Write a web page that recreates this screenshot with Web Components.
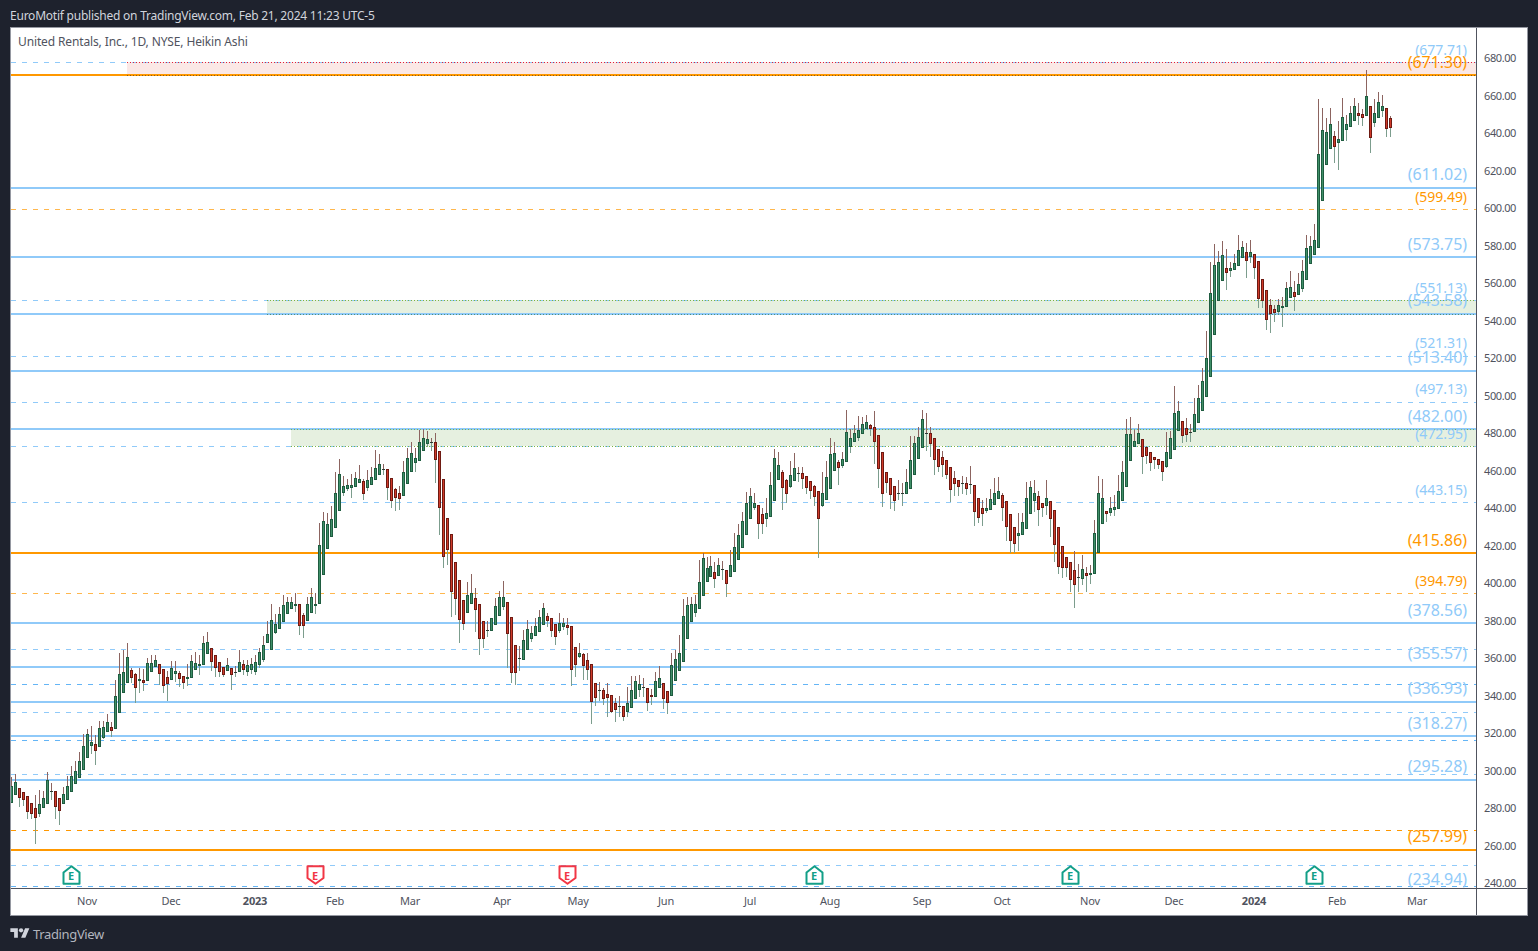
<!DOCTYPE html>
<html><head><meta charset="utf-8"><style>
html,body{margin:0;padding:0;background:#1e222d;height:100%}
body{font-family:"Noto Sans","Open Sans",sans-serif;overflow:hidden}
</style></head><body>
<tv-app>
  <tv-header>EuroMotif published on TradingView.com, Feb 21, 2024 11:23 UTC-5</tv-header>
  <tv-chart title-text="United Rentals, Inc., 1D, NYSE, Heikin Ashi"></tv-chart>
  <tv-footer>TradingView</tv-footer>
</tv-app>
<script>
const FONT='"Noto Sans","Open Sans",sans-serif';
const SEG=[
 [0,620,"g498,548,470,548;g487,524,462,524;r505,533,505,560;r517,540,517,558;r529,575,529,597;r550,581,550,597;r565,593,525,672;g553,581,510,590;g535,565,513,565;g481,551,456,551;d514,516,490,540;r514,560,514,597;r535,572,535,615;g523,553,502,553;g499,539,468,539;g469,517,438,517;g454,493,422,493;g424,475,396,475;g379,451,343,451;g343,415,327,415;g367,379,318,402;r373,394,345,434;g325,382,303,382;g322,355,303,358;g307,337,282,337;r322,334,305,352;g229,328,180,328;g163,280,99,280;g157,220,90,220;g112,190,69,190;r151,175,145,190;r163,205,160,248;g178,184,145,218;r181,188,148,212;g130,184,115,184;g130,157,105,157;g121,142,105,142;r133,163,133,195;r148,199,148,218;r172,193,152,243;g145,181,124,181;g154,163,124,185;r160,178,152,200;r169,190,169,207;g172,178,133,197;g124,175,105,175;g130,151,96,151;g133,139,106,165;g70,136,48,136;g67,103,36,103;r85,127,85,152;r106,145,106,172;r127,157,127,172;r142,166,142,172;g136,154,114,154;r145,166,145,210;d156,158,138,172;g127,157,90,157"],
 [58,0,"r1992,2010,1980,2025;g1995,2016,1980,2028;g1992,2010,1974,2022;g1986,2016,1965,2025;g1956,1995,1944,2004;g1935,1980,1908,1986"],
 [64,420,"g643,670,603,670;g601,690,552,690;g612,638,582,642;g583,626,560,626;g556,605,525,605;g547,581,531,581;g546,566,531,566;g553,557,520,575;r553,617,553,645;r586,617,580,655;g553,602,530,602;g532,578,505,578;g553,557,518,582;g376,553,310,553;g304,464,276,464;g313,386,280,386;g298,350,258,350;g220,323,155,323;g163,272,117,272;g199,218,168,228;g196,208,178,212;g196,203,163,234;g175,200,155,200;g178,188,136,188;r184,221,178,240;g181,203,150,212;g172,194,142,194;g145,181,90,181;g133,164,102,164;d148,150,132,165;r148,203,148,240;r175,242,175,264;r208,233,204,272;r220,236,198,270;g157,227,124,227;g115,193,84,193;g100,155,67,155;g115,128,85,155;g67,122,30,122;g55,94,28,94;g58,73,33,80;d67,71,55,92;r67,119,40,188;r94,263,94,345;r178,412,178,445;r295,389,295,435;r343,515,343,590;r427,536,427,586;r481,599,481,670;r541,611,541,630"],
 [114,420,"g526,578,487,578"],
 [115,570,"g70,102,12,103;r85,119,55,185;r103,207,103,255;r154,207,154,234;d181,185,154,201;g145,182,145,182;g109,164,85,164;g82,137,64,137;g82,110,33,120;r97,191,97,293;r142,308,142,338;r226,308,226,345;d265,267,228,302;g211,269,180,269;g178,239,150,239;g190,208,168,216;g169,199,145,199;g142,185,120,185;g115,164,100,164;r139,152,128,172;r145,182,145,200;r163,200,163,224;g160,182,129,190;g160,172,145,180;r166,173,145,195;r169,299,169,347;r232,284,232,320;g250,260,220,265;r253,287,250,330;r271,299,250,330;r283,395,283,462;r340,383,340,407;d361,365,337,392;r361,386,355,404;r373,383,340,440;r376,425,376,428;r400,419,385,455;d408,410,378,440;r409,440,409,453;g400,425,350,440;g361,413,318,413;g334,386,318,386;g343,361,315,380;d352,356,325,380;r355,398,355,422;r376,382,358,405;g334,380,305,380;g325,355,288,355;r340,386,340,416;r364,398,364,432;g286,379,250,379;g268,334,240,334;g250,302,195,302;g139,277,88,277;g106,208,80,208;g103,157,82,157;g103,130,75,140;g37,118,-30,118;g-36,77,-51,77;g-6,35,-39,35;g-12,20,-42,20;r7,26,-24,55;g-15,17,-36,17"],
 [178,400,"d507,509,483,540;r511,551,511,590;g496,530,450,530;g441,515,400,515;g406,479,372,479;g364,443,336,443;g310,404,277,404;g289,356,265,356;g310,323,280,330;r316,371,316,417;r343,371,325,402;g340,356,295,380;g256,350,217,350;g175,302,147,302;g196,239,156,239;r217,263,210,330;r241,281,238,309;g226,260,183,265;g205,242,160,242;d220,224,200,245;r220,236,202,267;r229,263,229,282;r244,272,244,298;r259,290,255,318;r274,356,274,474;g280,317,216,320;g232,299,183,299;g163,266,114,266;g160,214,126,214;r187,203,180,255;g178,197,156,205;g97,187,30,187;g115,142,88,158;g100,127,75,127;g91,115,48,122;g73,103,52,103;g67,88,45,88;r76,88,72,108;r82,127,33,192;r106,208,106,265;r157,281,157,320;r217,250,217,280;r235,284,235,327;r259,302,259,332;d280,282,240,300;d280,282,250,318;g247,281,208,281;g181,266,108,266;g130,224,108,224;g112,176,82,176;g58,145,30,145;d99,101,40,152;r100,131,82,170;r115,179,115,225;r148,200,148,215;r172,194,153,230;r181,224,181,236;r202,269,202,305;r235,251,213,287;r241,260,241,288;d249,251,228,282;r250,266,232,285;d253,257,198,282"],
 [241,380,"r316,395,316,438;r355,413,355,428;r385,401,360,438;g385,392,353,398;g358,389,327,389;g340,374,294,374;g334,356,291,356;r346,383,338,422;r364,440,364,482;r403,482,403,520;r442,491,442,518;g460,467,400,513;g427,464,400,464;g355,446,306,446;g322,401,303,401;g340,362,300,396;r349,389,333,437;r370,383,370,412;g355,377,300,404;r364,416,364,470;r391,494,391,545;r442,560,442,582;r499,563,499,593;r532,563,532,590;r547,599,547,636;r571,614,514,684;d591,594,552,636;g568,596,525,614;r580,587,560,636;g580,584,555,612;g460,581,420,581;g340,520,289,520;g355,431,297,431;r394,401,392,427;g385,398,352,407;g382,391,345,407;g334,386,285,386;g277,362,243,362;g163,320,117,320;g163,242,111,242;g184,202,150,202;g160,193,132,193;r178,230,178,282;r202,229,202,252;r217,250,217,273;r232,241,232,268;r238,254,238,267;r244,277,244,303;g217,260,156,264;g175,238,153,238;g100,209,18,209;g94,154,62,154;r124,169,124,189;r145,166,114,186;d156,158,132,186;g103,157,55,157"],
 [297,90,"g925,999,885,999;g874,963,835,963;g805,920,723,920;g610,862,516,862;g526,736,462,736;g517,632,484,632;g496,574,453,574;r535,550,477,600;g535,544,516,560;g520,540,492,540;g481,529,435,529;g472,505,454,505;r487,514,460,564;g487,502,450,518;r493,535,493,566;r514,626,514,653;r568,634,568,653;r601,691,601,720;r646,673,628,728;r658,668,645,696;g646,665,628,672;g649,655,622,710;g595,652,576,652;g592,625,543,625;r607,622,573,662;g583,616,548,616;g544,598,510,605;g475,571,435,571;g469,523,438,523;g451,496,403,496;g193,475,27,475;g121,334,54,334;g127,226,85,226;g103,178,55,178;r139,172,124,218"],
 [332,60,"g237,248,182,330;g172,242,114,242;g193,209,165,242;g160,200,138,200;g139,182,114,182;r160,167,129,195;r163,173,148,198;g109,167,30,167;r139,233,139,278;g160,188,117,200;g127,173,96,173;g139,152,105,170;r145,206,145,231;r175,203,168,231"]
];
const C={g:['#1f5c40','#3f8f68'],r:['#6e1a12','#cf3a2a'],d:['#2b3b33','#2b3b33']};
const WICKUP='#8c6460',WICKDN='#7c9d8d';
function candles(){let s='';
 for(const [start,oy,rows] of SEG){rows.split(';').forEach((row,k)=>{
  const i=start+k,x=i<175?11+4*i:10+4*i,kind=row[0],n=row.slice(1).split(',').map(Number);
  const Y=v=>Math.round(oy+v/3),t=Y(n[0]);let b=Y(n[1]);const h=Y(n[2]),l=Y(n[3]);
  if(kind==='d')b=t+1;if(b<=t)b=t+1;
  if(h<t)s+=`<rect x="${x}" y="${h}" width="1" height="${t-h}" fill="${WICKUP}"/>`;
  if(l>b)s+=`<rect x="${x}" y="${b}" width="1" height="${l-b}" fill="${WICKDN}"/>`;
  const [d,f]=C[kind];
  s+=`<rect x="${x-1}" y="${t}" width="3" height="${b-t}" fill="${d}"/>`;
  if(b-t>2)s+=`<rect x="${x}" y="${t+1}" width="1" height="${b-t-2}" fill="${f}"/>`;
 });}
 return s;}
const BLUE='#90caf9',DBLUE='#64b5f6',ORG='#ff9800',LORG='#ffb74d';
const SOLID=[[75,ORG],[188,BLUE],[257,BLUE],[314,BLUE],[371,BLUE],[429,BLUE],[553,ORG],[623,BLUE],[667,BLUE],[702,BLUE],[736,BLUE],[780,BLUE],[850,ORG]];
const DASH=[[62,BLUE],[209,LORG],[300,BLUE],[356,BLUE],[402,BLUE],[446,BLUE],[502,BLUE],[593,LORG],[649,BLUE],[684,DBLUE],[712,BLUE],[740,DBLUE],[774,BLUE],[830,ORG],[865,BLUE],[886,DBLUE]];
const LABELS=[[50,'677.71',14,BLUE],[62,'671.30',16,ORG],[174,'611.02',16,BLUE],[197,'599.49',14,ORG],[244,'573.75',16,BLUE],[288,'551.13',14,BLUE],[300,'543.58',16,BLUE],[343,'521.31',14,BLUE],[357,'513.40',16,BLUE],[389,'497.13',14,BLUE],[416,'482.00',16,BLUE],[434,'472.95',14,BLUE],[490,'443.15',14,BLUE],[540,'415.86',16,ORG],[581,'394.79',14,ORG],[610,'378.56',16,BLUE],[653,'355.57',16,BLUE],[688,'336.93',16,BLUE],[723,'318.27',16,BLUE],[766,'295.28',16,BLUE],[836,'257.99',16,ORG],[879,'234.94',16,BLUE]];
const EARN=[[71,1],[315,0],[567,0],[814,1],[1070,1],[1314,1]];
class TvApp extends HTMLElement{constructor(){super();this.attachShadow({mode:'open'}).innerHTML=`<style>:host{display:grid;grid-template-rows:27px 889px 35px;width:1538px;height:951px;background:#1e222d;box-sizing:border-box}</style><slot></slot>`}}
class TvHeader extends HTMLElement{constructor(){super();this.attachShadow({mode:'open'}).innerHTML=`<style>:host{display:flex;align-items:center;padding:3px 10px 0;box-sizing:border-box;height:27px;color:#d1d4dc;font:12px ${FONT};letter-spacing:-.23px;white-space:nowrap}</style><slot></slot>`}}
class TvFooter extends HTMLElement{constructor(){super();this.attachShadow({mode:'open'}).innerHTML=`<style>:host{display:flex;align-items:center;gap:3px;padding:0 10px;box-sizing:border-box;height:35px;color:#b2b5be;font:13px ${FONT};letter-spacing:-.35px}svg{width:20px;height:15px;display:block}</style><svg viewBox="0 0 36 28"><path fill="#d1d4dc" d="M14 22H7V11H0V4h14v18zM28 22h-8l7.5-18h8L28 22z"/><circle fill="#d1d4dc" cx="20" cy="8" r="4"/></svg><slot></slot>`}}
class TvPriceAxis extends HTMLElement{constructor(){super();let h='';for(let p=680;p>=240;p-=20)h+=`<span>${p}.00</span>`;
 this.attachShadow({mode:'open'}).innerHTML=`<style>:host{display:flex;flex-direction:column;align-items:stretch;border-left:1px solid #50535e;padding-top:11.25px;box-sizing:border-box;color:#50535e;font:11px/10px ${FONT};letter-spacing:-.4px}span{height:37.5px;flex:none;display:flex;align-items:center;padding-left:7px}</style>${h}`}}
class TvTimeAxis extends HTMLElement{constructor(){super();const T=[[87,'Nov'],[171,'Dec'],[255,'2023',1],[335,'Feb'],[410,'Mar'],[502,'Apr'],[578,'May'],[666,'Jun'],[750,'Jul'],[830,'Aug'],[922,'Sep'],[1002,'Oct'],[1090,'Nov'],[1174,'Dec'],[1254,'2024',1],[1337,'Feb'],[1417,'Mar']];
 this.attachShadow({mode:'open'}).innerHTML=`<style>:host{display:block;position:relative;border-top:1px solid #50535e;box-sizing:border-box;color:#50535e;font:11px ${FONT};letter-spacing:-.2px}span{position:absolute;top:4px;transform:translateX(-50%)}b{font-weight:700}</style>`+T.map(([x,t,b])=>`<span style="left:${x-11}px">${b?`<b>${t}</b>`:t}</span>`).join('')}}
class TvEarnings extends HTMLElement{connectedCallback(){if(this.shadowRoot)return;const up=this.hasAttribute('up'),c=up?'#139f88':'#f23645';
 const d=up?'M1.5 7.5 9.5 1.2 17.5 7.5V18.8H1.5Z':'M1.5 1.2H17.5V13L9.5 18.8 1.5 13Z';
 this.attachShadow({mode:'open'}).innerHTML=`<style>:host{position:absolute;width:19px;height:20px;display:block}svg{position:absolute;inset:0}span{position:absolute;left:0;right:0;top:4px;text-align:center;font:700 11px/13px ${FONT};color:${c}}</style><svg width="19" height="20" viewBox="0 0 19 20"><path d="${d}" fill="#fff" stroke="${c}" stroke-width="2" stroke-linejoin="round"/></svg><span>E</span>`}}
class TvPane extends HTMLElement{constructor(){super();
 const W=1465,H=860;let s='';
 s+=`<rect x="127" y="62" width="1349" height="13" fill="#fbe8e6"/><rect x="267" y="300" width="1209" height="14" fill="#e6f0e0"/><rect x="291" y="429" width="1185" height="17" fill="#e6f0e0"/>`;
 for(const [y,c] of DASH)s+=`<line x1="11" x2="1476" y1="${y+.5}" y2="${y+.5}" stroke="${c}" stroke-dasharray="5 6"/>`;
 for(const [y,c] of SOLID)s+=`<rect x="11" y="${y-1}" width="1465" height="2" fill="${c}"/>`;
 const dots=[[127,62,'#e0213a'],[127,75,'#8a5a10'],[267,300,'#7cb342'],[267,314,'#4f8f7a'],[291,429,'#7cb342'],[291,446,'#7cb342']];
 for(const [x,y,c] of dots)s+=`<line x1="${x}" x2="1476" y1="${y+.5}" y2="${y+.5}" stroke="${c}" stroke-dasharray="1 2"/>`;
 const labels=LABELS.map(([y,t,z,c])=>`<span class="lv" style="top:${y-28}px;font-size:${z}px;color:${c}">(${t})</span>`).join('');
 const marks=EARN.map(([x,u])=>`<tv-earnings ${u?'up':''} style="left:${x-11-9.5}px;top:${865-28}px"></tv-earnings>`).join('');
 this.attachShadow({mode:'open'}).innerHTML=`<style>:host{display:block;position:relative;background:#fff}svg{position:absolute;left:0;top:0;shape-rendering:crispEdges}.title{position:absolute;left:7px;top:5px;color:#50535e;font:12px ${FONT};letter-spacing:-.13px}.lv{position:absolute;right:9px;transform:translateY(-50%);line-height:1;white-space:nowrap;font-family:${FONT};letter-spacing:-.05px}</style><svg width="${W}" height="${H}" viewBox="11 28 ${W} ${H}">${s}${candles()}</svg>${marks}${labels}<div class="title"><slot></slot></div>`}}
class TvChart extends HTMLElement{constructor(){super();
 this.attachShadow({mode:'open'}).innerHTML=`<style>:host{display:grid;grid-template-columns:1465px 51px;grid-template-rows:860px 27px;margin:0 10px;width:1518px;height:889px;box-sizing:border-box;border:1px solid #9598a1;background:#fff}.corner{border-left:1px solid #50535e;border-top:1px solid #50535e}</style><tv-pane id="p"></tv-pane><tv-price-axis></tv-price-axis><tv-time-axis></tv-time-axis><div class="corner"></div>`}
 connectedCallback(){this.shadowRoot.getElementById('p').textContent=this.getAttribute('title-text')||''}}
customElements.define('tv-earnings',TvEarnings);
customElements.define('tv-pane',TvPane);
customElements.define('tv-price-axis',TvPriceAxis);
customElements.define('tv-time-axis',TvTimeAxis);
customElements.define('tv-chart',TvChart);
customElements.define('tv-header',TvHeader);
customElements.define('tv-footer',TvFooter);
customElements.define('tv-app',TvApp);
</script></body></html>
